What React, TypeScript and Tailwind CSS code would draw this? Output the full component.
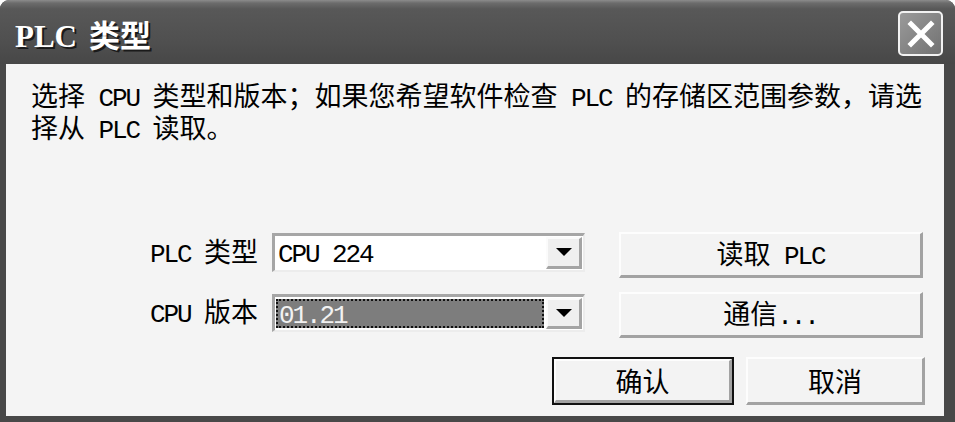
import React from "react";

const L = ({ children }: { children: React.ReactNode }) => (
  <span className="font-['Liberation_Mono',monospace] text-[26px] tracking-[-2.1px]">{children}</span>
);

const Arrow = () => (
  <svg width="16" height="9" viewBox="0 0 16 9">
    <polygon points="0,0 16,0 8,8" fill="#000" />
  </svg>
);

function Combo({ children, selected }: { children: React.ReactNode; selected?: boolean }) {
  return (
    <div className="flex w-[313px] h-full bg-white border-t-[3px] border-l-[3px] border-t-[#a6a6a6] border-l-[#a6a6a6] border-b-2 border-r-2 border-b-[#ececec] border-r-[#ececec] p-[1px]">
      {selected ? (
        <div className="flex-1 flex items-center my-[1px] mr-[2px] pl-[1px] bg-[#7d7d7d] border-2 border-dotted border-[#111] text-[#f2f2f2]">
          <span>{children}</span>
        </div>
      ) : (
        <div className="flex-1 flex items-center pl-[2px]">
          <span>{children}</span>
        </div>
      )}
      <div className="w-[36px] flex items-center justify-center bg-[#efefef] border-t-2 border-l-2 border-t-[#fbfbfb] border-l-[#fbfbfb] border-b-[3px] border-r-[3px] border-b-[#a4a4a4] border-r-[#a4a4a4]">
        <Arrow />
      </div>
    </div>
  );
}

function Btn({ children, className }: { children: React.ReactNode; className: string }) {
  return (
    <div
      className={
        "flex items-center justify-center bg-[#f3f3f3] border-t-2 border-l-2 border-t-[#fdfdfd] border-l-[#fdfdfd] border-b-[3px] border-r-[3px] border-b-[#a2a2a2] border-r-[#a2a2a2] " +
        className
      }
    >
      <span>{children}</span>
    </div>
  );
}

export default function App() {
  return (
    <div className="w-[955px] h-[422px] bg-white font-['Noto_Sans_CJK_SC',sans-serif] text-black">
      <div className="flex flex-col w-full h-full rounded-t-[9px] bg-[#484848] overflow-hidden">
        {/* title bar */}
        <div className="h-[64px] shrink-0 flex items-center justify-between pl-[15px] pr-[12px] bg-[linear-gradient(#8c8c8c_0px,#6c6c6c_3px,#585858_9px,#505050_40px,#474747_64px)]">
          <div className="flex items-baseline gap-[12px] text-white pt-[6px] [text-shadow:2px_2px_0_#1a1a1a]">
            <span className="font-['Liberation_Serif',serif] font-bold text-[31px] leading-[36px]">PLC</span>
            <span className="font-bold text-[31px] leading-[36px]">类型</span>
          </div>
          <div className="w-[45px] h-[45px] mt-[3px] rounded-[5px] border-2 border-[#f2f2f2] bg-[linear-gradient(135deg,#9a9a9a,#727272)] flex items-center justify-center">
            <svg width="28" height="28" viewBox="0 0 28 28">
              <path d="M4 4 L24 24 M24 4 L4 24" stroke="#fff" strokeWidth="5" strokeLinecap="square" />
            </svg>
          </div>
        </div>
        {/* body */}
        <div className="flex-1 ml-[6px] mr-[11px] mb-[6px] bg-[#f4f4f4] pl-[25px] pt-[17px] text-[27px] leading-[27px]">
          <p className="w-[900px]">
            选择<L> CPU </L>类型和版本；如果您希望软件检查<L> PLC </L>的存储区范围参数，请选择从<L> PLC </L>读取。
          </p>
          <div className="mt-[87px] flex flex-col">
            <div className="flex items-start h-[46px]">
              <div className="flex items-center mt-[1px] h-[39px]">
                <div className="w-[227px] text-right">
                  <L>PLC </L>类型
                </div>
                <div className="ml-[14px] h-full">
                  <Combo>
                    <L>CPU 224</L>
                  </Combo>
                </div>
              </div>
              <Btn className="ml-[34px] w-[304px] h-[46px]">
                读取<L> PLC</L>
              </Btn>
            </div>
            <div className="flex items-start h-[46px] mt-[14px]">
              <div className="flex items-center mt-[2px] h-[38px]">
                <div className="w-[227px] text-right">
                  <L>CPU </L>版本
                </div>
                <div className="ml-[14px] h-full">
                  <Combo selected>
                    <L>01.21</L>
                  </Combo>
                </div>
              </div>
              <Btn className="ml-[34px] w-[304px] h-[46px]">
                通信<L>...</L>
              </Btn>
            </div>
            <div className="flex items-start h-[48px] mt-[19px]">
              <div className="ml-[521px] w-[182px] h-[48px] border-2 border-[#111]">
                <Btn className="w-full h-full">确认</Btn>
              </div>
              <Btn className="ml-[12px] w-[179px] h-[48px]">取消</Btn>
            </div>
          </div>
        </div>
      </div>
    </div>
  );
}
